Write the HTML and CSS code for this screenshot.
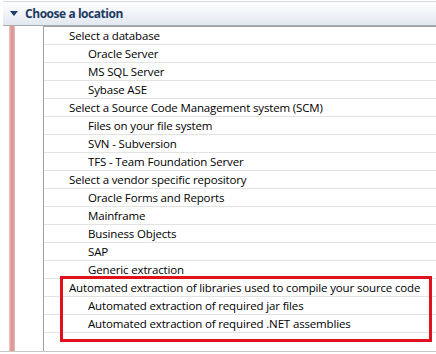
FILE: index.html
```html
<!DOCTYPE html>
<html lang="en">
<head>
    <meta charset="UTF-8">
    <title>Choose a location</title>
    <link rel="stylesheet" href="styles.css">
</head>
<body>
    <div class="section-header">
        <span class="twisty"></span>
        <span class="section-title">Choose a location</span>
    </div>
    <div class="section-body">
        <div class="side-bar"></div>
        <div class="location-list">
            <div class="row parent">Select a database</div>
            <div class="row child">Oracle Server</div>
            <div class="row child">MS SQL Server</div>
            <div class="row child">Sybase ASE</div>
            <div class="row parent">Select a Source Code Management system (SCM)</div>
            <div class="row child">Files on your file system</div>
            <div class="row child">SVN - Subversion</div>
            <div class="row child">TFS - Team Foundation Server</div>
            <div class="row parent">Select a vendor specific repository</div>
            <div class="row child">Oracle Forms and Reports</div>
            <div class="row child">Mainframe</div>
            <div class="row child">Business Objects</div>
            <div class="row child">SAP</div>
            <div class="row child">Generic extraction</div>
            <div class="highlight-group">
                <div class="row parent">Automated extraction of libraries used to compile your source code</div>
                <div class="row child">Automated extraction of required jar files</div>
                <div class="row child">Automated extraction of required .NET assemblies</div>
            </div>
        </div>
    </div>
</body>
</html>
```

FILE: styles.css
```css
body, html {
    margin: 0;
    padding: 0;
    background: #ffffff;
    font-family: "Open Sans", "Noto Sans", sans-serif;
    font-size: 11.5px;
    letter-spacing: -0.15px;
    color: #000000;
    overflow: hidden;
}
.section-header {
    display: flex;
    align-items: center;
    height: 23px;
    margin: 1px 0 0 3px;
    padding-left: 7px;
    border-top: 1px solid #d4d9de;
    border-bottom: 1px solid #a7a9ab;
    background: linear-gradient(to bottom, #ffffff, #e2e8f0);
}
.twisty {
    width: 0;
    height: 0;
    border-left: 4px solid transparent;
    border-right: 4px solid transparent;
    border-top: 5px solid #1f3b66;
    margin-right: 7px;
}
.section-title {
    font-weight: bold;
    font-size: 12px;
    letter-spacing: -0.45px;
    color: #1d3a63;
}
.section-body {
    display: flex;
    height: 325px;
    border-bottom: 1px solid #c6c6c6;
}
.side-bar {
    flex: none;
    width: 6px;
    margin-left: 9px;
    background: linear-gradient(to right, #eec8c8, #d98c8c 50%, #e8b8b8);
}
.location-list {
    flex: 1;
    min-width: 0;
    margin-left: 28px;
    border-left: 1px solid #a0a0a0;
    border-top: 1px solid #a0a0a0;
}
.row {
    height: 17px;
    line-height: 17px;
    border-bottom: 1px solid #e3e3e3;
    white-space: nowrap;
}
.parent {
    padding-left: 25px;
}
.child {
    padding-left: 44px;
}
.highlight-group {
    position: relative;
}
.highlight-group::after {
    content: "";
    position: absolute;
    top: -3px;
    bottom: -9px;
    left: 16px;
    right: 4px;
    border: 3px solid #e0101c;
}
```
